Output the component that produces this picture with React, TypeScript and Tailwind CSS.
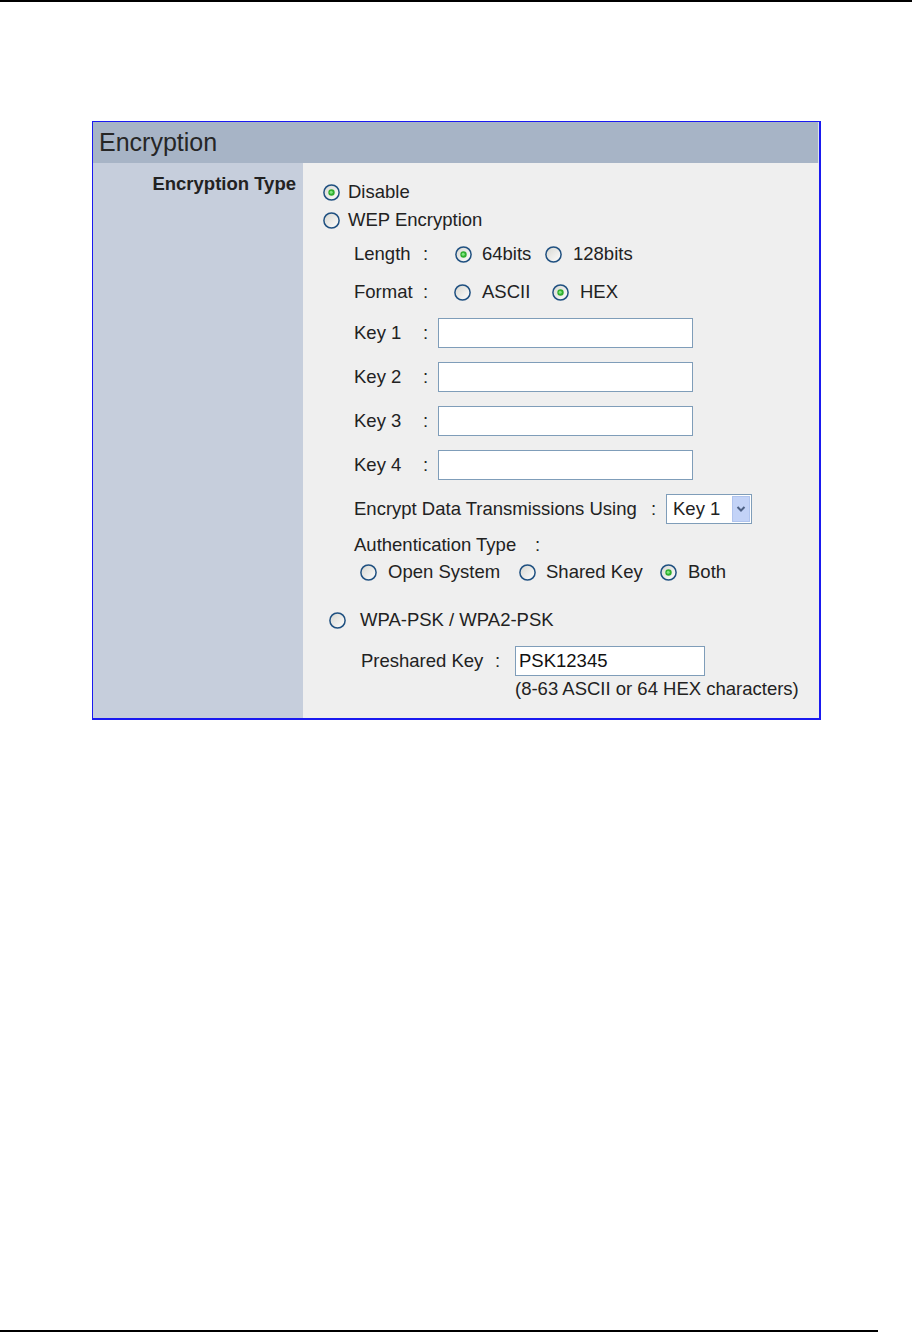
import React from 'react';

function Radio({ checked = false }: { checked?: boolean }) {
  return (
    <svg width="17" height="17" viewBox="0 0 17 17" className="shrink-0">
      <defs>
        <linearGradient id={checked ? 'rg-on' : 'rg-off'} x1="0" y1="0" x2="1" y2="1">
          <stop offset="0" stopColor="#d6d6d0" />
          <stop offset="1" stopColor="#ffffff" />
        </linearGradient>
      </defs>
      <circle cx="8.5" cy="8.5" r="7.6" fill={`url(#${checked ? 'rg-on' : 'rg-off'})`} stroke="#1f5080" strokeWidth="1.5" />
      {checked && (
        <>
          <circle cx="8.5" cy="8.5" r="3.2" fill="#2fae2f" />
          <circle cx="8.2" cy="8.2" r="1.5" fill="#7ee67e" />
        </>
      )}
    </svg>
  );
}

function TextBox({ width, value = '' }: { width: string; value?: string }) {
  return (
    <div
      className={`${width} h-[30px] bg-white border border-[#7f9db9] flex items-center px-[3px] text-[18.5px] text-[#111]`}
    >
      {value}
    </div>
  );
}

export default function App() {
  return (
    <div
      className="w-[912px] min-h-[1333px] bg-white text-[#222]"
      style={{ fontFamily: '"Liberation Sans", Arial, sans-serif' }}
    >
      <div className="h-[2px] bg-black" />

      {/* Encryption panel */}
      <div className="ml-[92px] mt-[119px] w-[729px] border border-r-2 border-b-2 border-[#1a1af0]">
        <div className="h-[41px] bg-[#a7b4c6] flex items-center pl-[6px] text-[25px] text-[#262626] border-r border-[#dde3ec]">
          Encryption
        </div>

        <div className="flex">
          <div className="w-[210px] bg-[#c6cedc] pt-[10px] pr-[7px] text-right">
            <span className="text-[18.5px] leading-[21px] font-bold text-[#222]">Encryption Type</span>
          </div>

          <div className="flex-1 bg-[#efefef] pl-[20px] pt-[15px] pb-[18px] text-[18.5px]">
            <div className="h-[28px] flex items-center gap-[8px]">
              <Radio checked />
              <span>Disable</span>
            </div>
            <div className="h-[28px] flex items-center gap-[8px]">
              <Radio />
              <span>WEP Encryption</span>
            </div>

            <div className="ml-[31px]">
              <div className="mt-[6px] h-[28px] flex items-center">
                <span className="w-[69px]">Length</span>
                <span className="w-[32px]">:</span>
                <Radio checked />
                <span className="ml-[10px] w-[63px]">64bits</span>
                <Radio />
                <span className="ml-[11px]">128bits</span>
              </div>
              <div className="mt-[10px] h-[28px] flex items-center">
                <span className="w-[69px]">Format</span>
                <span className="w-[31px]">:</span>
                <Radio checked={false} />
                <span className="ml-[11px] w-[70px]">ASCII</span>
                <Radio checked />
                <span className="ml-[11px]">HEX</span>
              </div>

              {['Key 1', 'Key 2', 'Key 3', 'Key 4'].map((k, i) => (
                <div key={k} className={`${i === 0 ? 'mt-[12px]' : 'mt-[14px]'} h-[30px] flex items-center`}>
                  <span className="w-[69px]">{k}</span>
                  <span className="w-[15px]">:</span>
                  <TextBox width="w-[255px]" />
                </div>
              ))}

              <div className="mt-[14px] h-[30px] flex items-center">
                <span className="w-[297px]">Encrypt Data Transmissions Using</span>
                <span className="w-[15px]">:</span>
                <div className="w-[86px] h-[30px] bg-white border border-[#7f9db9] flex items-center justify-between pl-[6px] pr-[1px]">
                  <span>Key 1</span>
                  <div className="w-[18px] h-[26px] bg-[#c3d3f7] border border-[#b0c4ee] flex items-center justify-center">
                    <svg width="10" height="8" viewBox="0 0 10 8">
                      <path d="M1.5 2 L5 5.5 L8.5 2" fill="none" stroke="#4d6185" strokeWidth="2" />
                    </svg>
                  </div>
                </div>
              </div>

              <div className="mt-[8px] h-[26px] flex items-center">
                <span className="w-[181px]">Authentication Type</span>
                <span>:</span>
              </div>
              <div className="h-[28px] flex items-center ml-[6px]">
                <Radio />
                <span className="ml-[11px] w-[131px]">Open System</span>
                <Radio />
                <span className="ml-[10px] w-[114px]">Shared Key</span>
                <Radio checked />
                <span className="ml-[11px]">Both</span>
              </div>
            </div>

            <div className="mt-[20px] h-[28px] flex items-center ml-[6px]">
              <Radio />
              <span className="ml-[14px]">WPA-PSK / WPA2-PSK</span>
            </div>

            <div className="ml-[38px]">
              <div className="mt-[12px] h-[30px] flex items-center">
                <span className="w-[134px]">Preshared Key</span>
                <span className="w-[20px]">:</span>
                <TextBox width="w-[190px]" value="PSK12345" />
              </div>
              <div className="mt-[2px] h-[22px] flex items-center ml-[154px]">
                (8-63 ASCII or 64 HEX characters)
              </div>
            </div>
          </div>
        </div>
      </div>

      <div className="mt-[610px] w-[878px] h-[2px] bg-black" />
    </div>
  );
}
